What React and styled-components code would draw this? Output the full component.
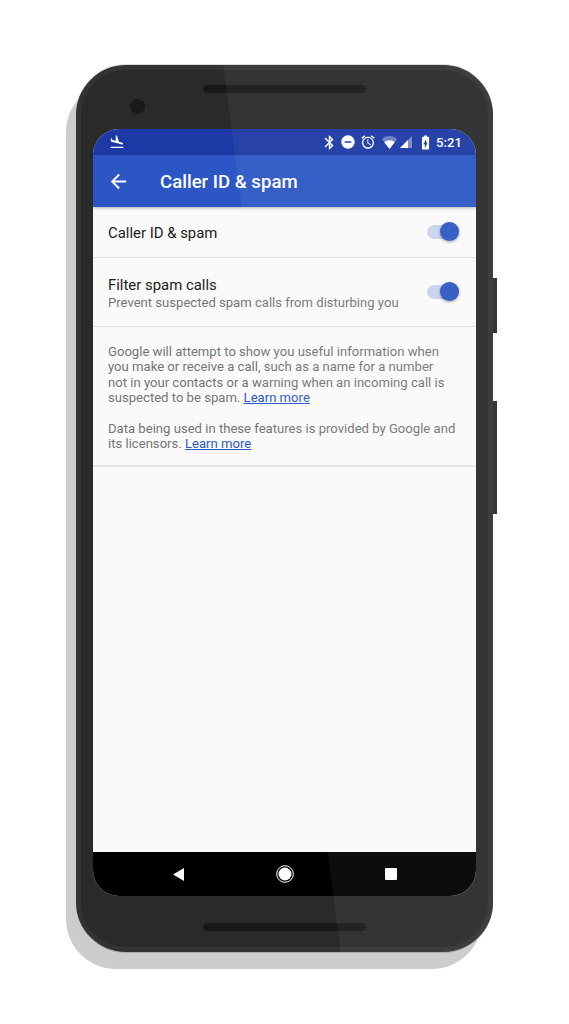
import React from 'react';
import styled, { createGlobalStyle } from 'styled-components';

const GlobalStyle = createGlobalStyle`
  html, body {
    margin: 0;
    background: #fff;
    font-family: Roboto, "Liberation Sans", sans-serif;
  }
`;

const Stage = styled.div`
  width: 569px;
  height: 1024px;
  padding: 65px 0 0 76px;
  box-sizing: border-box;
  overflow: hidden;
`;

const Phone = styled.div`
  position: relative;
  width: 417px;
  height: 887px;
`;

const DropShadow = styled.div`
  position: absolute;
  left: -10px;
  top: 17px;
  width: 416px;
  height: 887px;
  border-radius: 50px;
  background: #cdcdcd;
`;

const SideKey = styled.div`
  position: absolute;
  right: -3.5px;
  top: ${(p) => p.$top}px;
  width: 4px;
  height: ${(p) => p.$height}px;
  background: #363636;
`;

const Body = styled.div`
  position: relative;
  height: 100%;
  box-sizing: border-box;
  border: 5px solid #333;
  border-radius: 50px;
  background: #2a2a2a;
  box-shadow: 0 1px 0 #aaa, 0 -1px 0 #ddd;
  display: flex;
  flex-direction: column;
  align-items: center;
  overflow: hidden;
`;

const TopBezel = styled.div`
  position: relative;
  height: 59px;
  width: 100%;
  flex: none;
  display: flex;
  justify-content: center;
  padding-top: 15px;
  box-sizing: border-box;
`;

const BottomBezel = styled.div`
  width: 100%;
  flex: 1;
  display: flex;
  justify-content: center;
  padding-top: 27px;
  box-sizing: border-box;
`;

const Speaker = styled.div`
  width: 163px;
  height: 8px;
  border-radius: 4px;
  background: #181818;
`;

const Camera = styled.div`
  position: absolute;
  left: 49px;
  top: 29px;
  width: 15px;
  height: 15px;
  border-radius: 50%;
  background: #191919;
`;

const Screen = styled.div`
  width: 383px;
  height: 767px;
  flex: none;
  border-radius: 26px;
  overflow: hidden;
  display: flex;
  flex-direction: column;
  background: #fafafa;
`;

const StatusBar = styled.div`
  height: 26px;
  flex: none;
  background: #1c39a6;
  color: #fff;
  display: flex;
  align-items: center;
  justify-content: space-between;
  padding: 0 14px 0 16px;
`;

const StatusIcons = styled.div`
  display: flex;
  align-items: center;
`;

const Icon = styled.svg`
  flex: none;
  margin-left: ${(p) => p.$gap || 0}px;
  fill: currentColor;
`;

const Clock = styled.span`
  font-size: 13px;
  font-weight: 500;
  margin-left: 2.5px;
  letter-spacing: 0.1px;
`;

const AppBar = styled.div`
  height: 52px;
  flex: none;
  background: #2b56c4;
  color: #fff;
  display: flex;
  align-items: center;
  box-shadow: 0 1px 3px rgba(0, 0, 0, 0.3);
  position: relative;
  padding-left: 14px;
`;

const BackButton = styled.div`
  width: 53px;
  height: 24px;
  display: flex;
  align-items: center;
`;

const Title = styled.h1`
  margin: 0;
  padding-top: 2px;
  font-size: 18.6px;
  font-weight: 500;
  line-height: 24px;
`;

const Content = styled.div`
  flex: 1;
`;

const Row = styled.div`
  height: ${(p) => p.$height}px;
  box-sizing: border-box;
  border-bottom: 1px solid #dedede;
  padding: 0 17px 0 15px;
  display: flex;
  align-items: center;
  justify-content: space-between;
`;

const RowLabel = styled.div`
  padding-top: ${(p) => p.$nudge || 0}px;
`;

const RowTitle = styled.div`
  font-size: 14.9px;
  line-height: 18px;
  color: #212121;
`;

const RowSub = styled.div`
  font-size: 13.09px;
  line-height: 18px;
  color: #757575;
`;

const Toggle = styled.div`
  position: relative;
  width: 32px;
  height: 14px;
  border-radius: 7px;
  background: #c9d3ee;
`;

const Knob = styled.div`
  position: absolute;
  right: 0;
  top: -3px;
  width: 19px;
  height: 19px;
  border-radius: 50%;
  background: #2d59c5;
  box-shadow: 0 1px 3px rgba(0, 0, 0, 0.4);
`;

const Info = styled.div`
  padding: 17px 15px 13px 15px;
  border-bottom: 2px solid #e4e4e4;
`;

const Para = styled.p`
  margin: 0 0 16px;
  font-size: 13.1px;
  line-height: 15.3px;
  color: #757575;

  &:last-child {
    margin-bottom: 0;
  }
`;

const Link = styled.a`
  color: #2b56c4;
  text-decoration: underline;
`;

const NavBar = styled.div`
  height: 44px;
  flex: none;
  background: #000;
  display: grid;
  grid-template-columns: repeat(3, 106px);
  justify-content: center;
  align-items: center;
  justify-items: center;
`;

const Shine = styled.div`
  position: absolute;
  inset: 0;
  border-radius: 50px;
  background: rgba(255, 255, 255, 0.05);
  clip-path: polygon(147px 0, 100% 0, 100% 100%, 265px 100%);
  pointer-events: none;
`;

const Glyph = ({ size = 16, d, gap }) => (
  <Icon width={size} height={size} viewBox="0 0 24 24" $gap={gap}>
    <path d={d} />
  </Icon>
);

const icons = {
  flight: 'M2.5 19h19v2h-19zm7.18-5.73l4.35 1.16 5.31 1.42c.8.21 1.62-.26 1.84-1.06.21-.8-.26-1.62-1.06-1.84l-5.31-1.42-2.76-9.02L10.12 2v8.28L5.15 8.95l-.93-2.32-1.45-.39v5.17l1.6.43 5.31 1.43z',
  bluetooth: 'M17.71 7.71L12 2h-1v7.59L6.41 5 5 6.41 10.59 12 5 17.59 6.41 19 11 14.41V22h1l5.71-5.71-4.3-4.29 4.3-4.29zM13 5.83l1.88 1.88L13 9.59V5.83zm1.88 10.46L13 18.17v-3.76l1.88 1.88z',
  dnd: 'M12 2C6.48 2 2 6.48 2 12s4.48 10 10 10 10-4.48 10-10S17.52 2 12 2zm5 11H7v-2h10v2z',
  alarm: 'M22 5.72l-4.6-3.86-1.29 1.53 4.6 3.86L22 5.72zM7.88 3.39L6.6 1.86 2 5.71l1.29 1.53 4.59-3.85zM12.5 8H11v6l4.75 2.85.75-1.23-4-2.37V8zM12 4c-4.97 0-9 4.03-9 9s4.02 9 9 9c4.97 0 9-4.03 9-9s-4.03-9-9-9zm0 16c-3.87 0-7-3.13-7-7s3.13-7 7-7 7 3.13 7 7-3.13 7-7 7z',
  battery: 'M15.67 4H14V2h-4v2H8.33C7.6 4 7 4.6 7 5.33v15.33C7 21.4 7.6 22 8.33 22h7.33c.74 0 1.34-.6 1.34-1.33V5.33C17 4.6 16.4 4 15.67 4zM11 20v-5.5H9L13 7v5.5h2L11 20z',
  back: 'M20 11H7.83l5.59-5.59L12 4l-8 8 8 8 1.41-1.41L7.83 13H20v-2z',
};

const Wifi = () => (
  <Icon width="15" height="13" viewBox="0 0 15 13" $gap={5.5}>
    <path fillOpacity="0.35" d="M7.5 13L0 3.200C2 1.200 4.600 0 7.500 0S13 1.200 15 3.200z" />
    <path d="M7.500 13L2.300 6.200C3.700 5 5.500 4.300 7.500 4.300s3.800.7 5.200 1.900z" />
  </Icon>
);

const Signal = () => (
  <Icon width="12" height="12" viewBox="0 0 12 12" $gap={3.5}>
    <path fillOpacity="0.4" d="M12 0v12H0z" />
    <path d="M8 4v8H0z" />
  </Icon>
);

const SwitchOn = () => (
  <Toggle>
    <Knob />
  </Toggle>
);

function App() {
  return (
    <Stage>
      <GlobalStyle />
      <Phone>
        <DropShadow />
        <SideKey $top={213} $height={55} />
        <SideKey $top={336} $height={113} />
        <Body>
          <TopBezel>
            <Speaker />
            <Camera />
          </TopBezel>
          <Screen>
            <StatusBar>
              <Glyph size={16} d={icons.flight} />
              <StatusIcons>
                <Glyph size={17} d={icons.bluetooth} />
                <Glyph size={16} d={icons.dnd} gap={2} />
                <Glyph size={16} d={icons.alarm} gap={4} />
                <Wifi />
                <Signal />
                <Glyph size={17} d={icons.battery} gap={4.5} />
                <Clock>5:21</Clock>
              </StatusIcons>
            </StatusBar>
            <AppBar>
              <BackButton>
                <Glyph size={23} d={icons.back} />
              </BackButton>
              <Title>Caller ID &amp; spam</Title>
            </AppBar>
            <Content>
              <Row $height={51}>
                <RowLabel $nudge={2}>
                  <RowTitle>Caller ID &amp; spam</RowTitle>
                </RowLabel>
                <SwitchOn />
              </Row>
              <Row $height={69}>
                <RowLabel $nudge={3}>
                  <RowTitle>Filter spam calls</RowTitle>
                  <RowSub>Prevent suspected spam calls from disturbing you</RowSub>
                </RowLabel>
                <SwitchOn />
              </Row>
              <Info>
                <Para>
                  Google will attempt to show you useful information when
                  <br />
                  you make or receive a call, such as a name for a number
                  <br />
                  not in your contacts or a warning when an incoming call is
                  <br />
                  suspected to be spam. <Link>Learn more</Link>
                </Para>
                <Para>
                  Data being used in these features is provided by Google and
                  <br />
                  its licensors. <Link>Learn more</Link>
                </Para>
              </Info>
            </Content>
            <NavBar>
              <svg width="12" height="13" viewBox="0 0 12 13" fill="#fff">
                <path d="M11 0v13L0 6.500z" />
              </svg>
              <svg width="18" height="18" viewBox="0 0 18 18">
                <circle cx="9" cy="9" r="8.300" fill="none" stroke="#fff" strokeWidth="1" />
                <circle cx="9" cy="9" r="6.500" fill="#fff" />
              </svg>
              <svg width="12" height="12" viewBox="0 0 12 12">
                <rect width="12" height="12" rx="1" fill="#fff" />
              </svg>
            </NavBar>
          </Screen>
          <BottomBezel>
            <Speaker />
          </BottomBezel>
        </Body>
        <Shine />
      </Phone>
    </Stage>
  );
}

export default App;
